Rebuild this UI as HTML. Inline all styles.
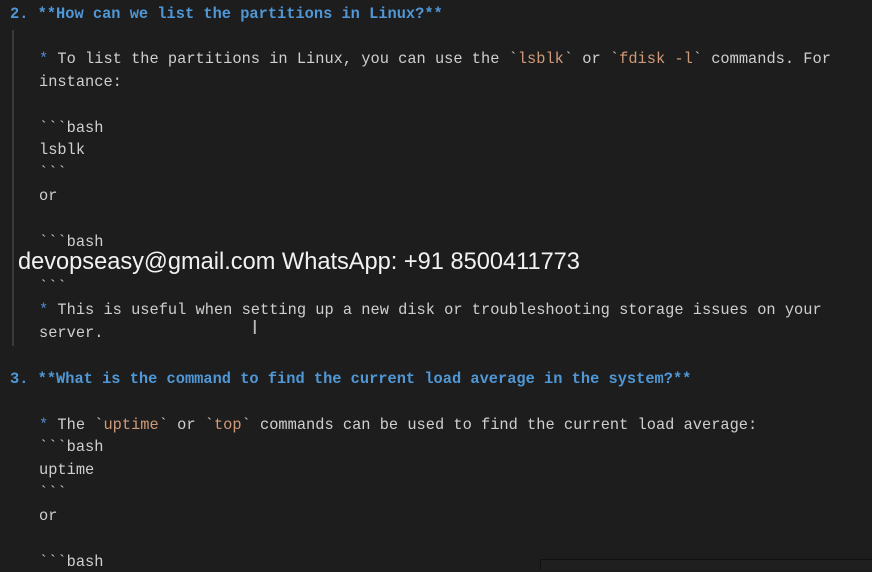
<!DOCTYPE html><html><head><style>
body{margin:0;width:872px;height:569px;background:#1d1d1d;overflow:hidden;position:relative;font-family:"Liberation Mono",monospace;font-size:15.35px;color:#cfcfcf}
.l{position:absolute;white-space:pre;line-height:20px}
.h{color:#4f97d6;font-weight:bold}
.b{color:#4f8fd6}
.c{color:#d09a78}
.bar{position:absolute;left:12px;top:30px;width:2px;height:316px;background:#3a3a3a}
.wm{position:absolute;left:18px;top:249px;font-family:"Liberation Sans",sans-serif;font-size:23.6px;color:#f2f2f2;white-space:pre}
</style></head><body>
<div class="bar"></div>
<div class="l h" style="left:10px;top:4px">2. **How can we list the partitions in Linux?**</div>
<div class="l" style="left:39px;top:49px"><span class="b">*</span> To list the partitions in Linux, you can use the &#96;<span class="c">lsblk</span>&#96; or &#96;<span class="c">fdisk -l</span>&#96; commands. For</div>
<div class="l" style="left:39px;top:72px">instance:</div>
<div class="l" style="left:39px;top:118px">&#96;&#96;&#96;bash</div>
<div class="l" style="left:39px;top:140px">lsblk</div>
<div class="l" style="left:39px;top:163px">&#96;&#96;&#96;</div>
<div class="l" style="left:39px;top:186px">or</div>
<div class="l" style="left:39px;top:232px">&#96;&#96;&#96;bash</div>
<div class="l" style="left:39px;top:277px">&#96;&#96;&#96;</div>
<div class="l" style="left:39px;top:300px"><span class="b">*</span> This is useful when setting up a new disk or troubleshooting storage issues on your</div>
<div class="l" style="left:39px;top:323px">server.</div>
<div class="l" style="left:252px;top:318px;font-family:'Liberation Sans',sans-serif;font-size:20px;color:#bbb">I</div>
<div class="l h" style="left:10px;top:369px">3. **What is the command to find the current load average in the system?**</div>
<div class="l" style="left:39px;top:415px"><span class="b">*</span> The &#96;<span class="c">uptime</span>&#96; or &#96;<span class="c">top</span>&#96; commands can be used to find the current load average:</div>
<div class="l" style="left:39px;top:437px">&#96;&#96;&#96;bash</div>
<div class="l" style="left:39px;top:460px">uptime</div>
<div class="l" style="left:39px;top:483px">&#96;&#96;&#96;</div>
<div class="l" style="left:39px;top:506px">or</div>
<div class="l" style="left:39px;top:552px">&#96;&#96;&#96;bash</div>
<div class="wm">devopseasy@gmail.com WhatsApp: +91 8500411773</div>
<div style="position:absolute;left:540px;top:559px;width:332px;height:10px;border-top:1px solid #111;border-left:1px solid #111;background:#1f1f1f"></div>
</body></html>
